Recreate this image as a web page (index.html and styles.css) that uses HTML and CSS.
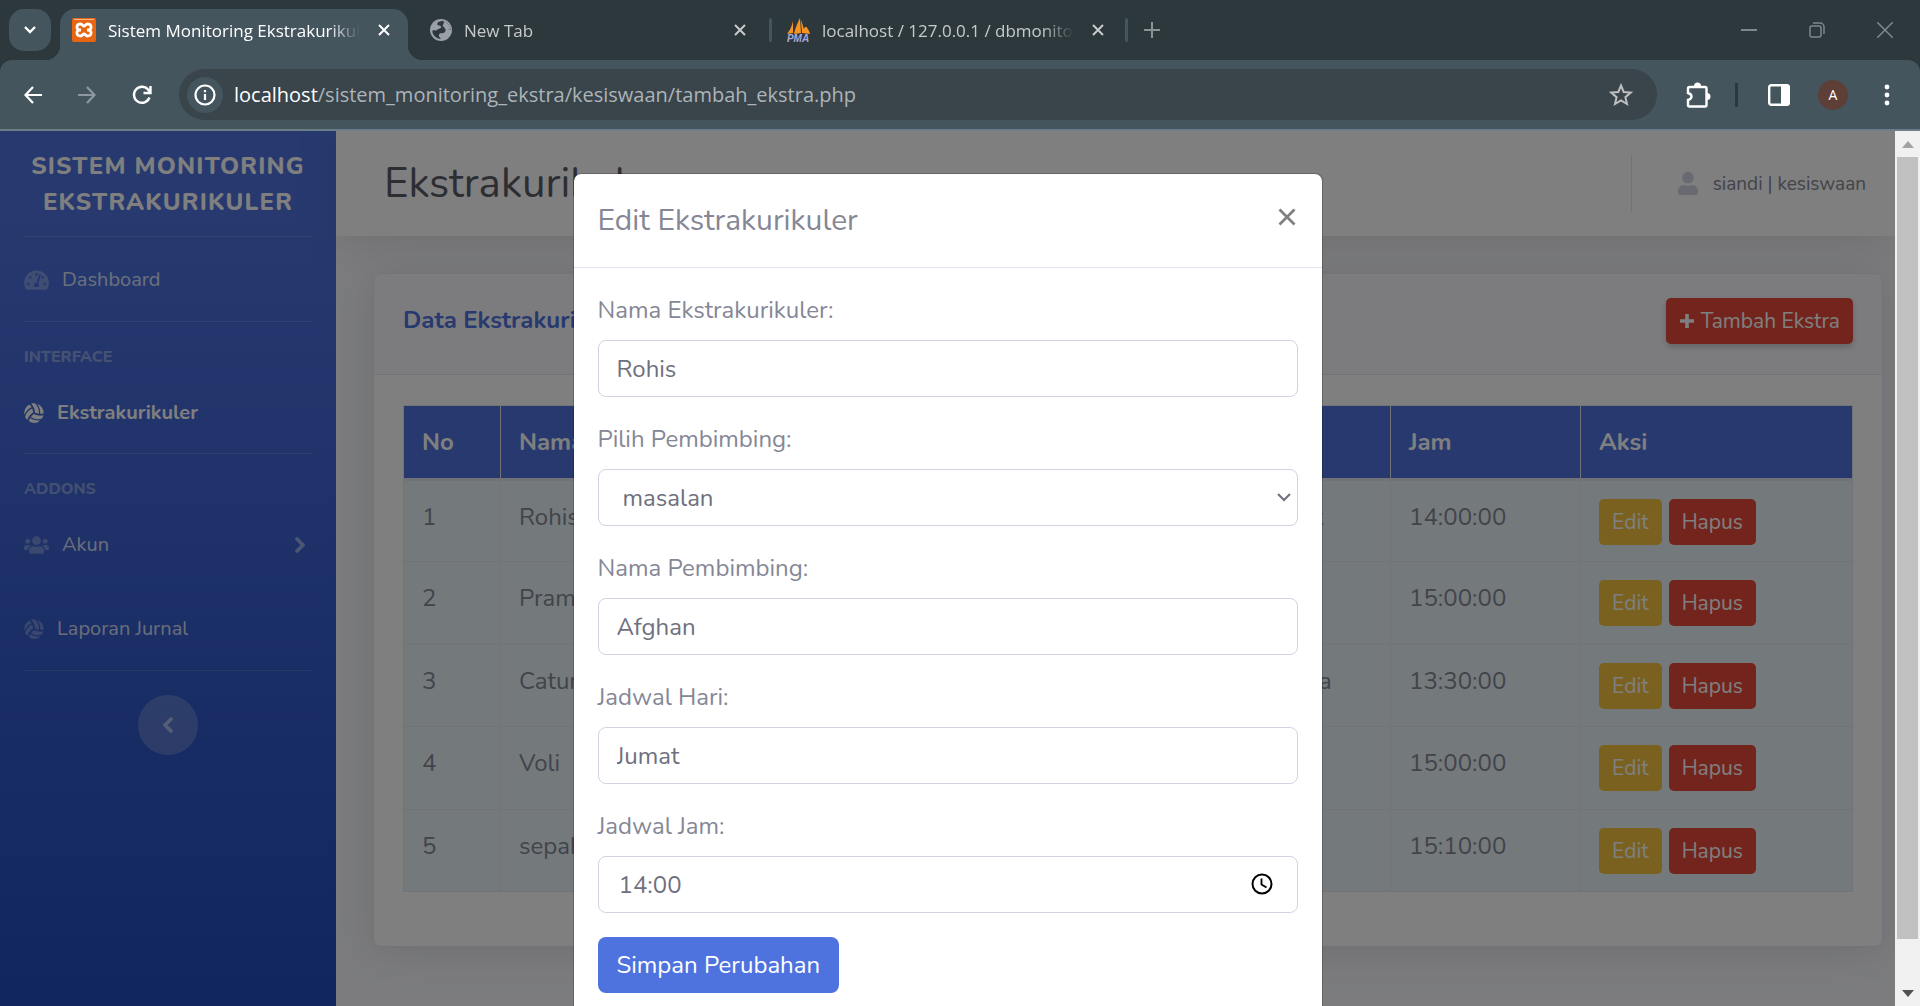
FILE: index.html
```html
<!DOCTYPE html>
<html lang="id">
<head>
<meta charset="utf-8">
<title>Sistem Monitoring Ekstrakurikuler</title>
<link rel="stylesheet" href="styles.css">
</head>
<body>
<svg class="defs" aria-hidden="true">
  <symbol id="volley" viewBox="0 0 512 512"><path d="M231.39 243.48a285.56 285.56 0 0 0-22.7-105.7c-90.8 42.4-157.5 122.4-180.3 216.8a249 249 0 0 0 56.9 81.1 333.87 333.87 0 0 1 146.1-192.2zm-36.9-134.4a284.23 284.23 0 0 0-57.4-70.7c-91 49.8-144.8 152.9-125 262.2 33.4-83.1 98.4-152 182.4-191.5zm187.6 165.1c8.6-99.8-27.3-197.5-97.5-264.4-14.7-1.7-51.6-5.5-98.9 8.5A333.87 333.87 0 0 1 279.19 241a285 285 0 0 0 102.9 33.18zm-124.7 9.5a286.33 286.33 0 0 0-80.2 72.6c82 57.3 184.5 75.1 277.5 47.8a247.15 247.15 0 0 0 42.2-89.9 336.1 336.1 0 0 1-80.9 10.4c-54.6-.1-108.9-14.1-158.6-40.9zm-98.3 99.7c-15.2 26-25.7 54.4-32.1 84.2a247.07 247.07 0 0 0 289-22.1c-112.9 16.1-203.3-24.8-256.9-62.1zm180.3-360.6c55.3 70.4 82.5 161.2 74.6 253.6a286.59 286.59 0 0 0 89.7-14.2c0-2 .3-4 .3-6 0-107.8-68.7-199.1-164.6-233.4z"/></symbol>
  <symbol id="x" viewBox="0 0 12 12"><path d="M1 1L11 11M11 1L1 11" fill="none" stroke="currentColor" stroke-width="2"/></symbol>
</svg>

<header class="browser">
  <div class="tabstrip">
    <button class="tab-search" aria-label="Search tabs"><svg width="12" height="8" viewBox="0 0 12 8"><path d="M1 1l5 5 5-5" fill="none" stroke="currentColor" stroke-width="2.4"/></svg></button>
    <div class="tab active">
      <svg class="favicon" viewBox="0 0 24 24"><rect width="24" height="24" rx="2" fill="#e8650f"/><path d="M2 1.500h20" stroke="#f7b58a" stroke-width="1"/><path d="M8.500 6c-4 0-4.500 4-2 6-2.500 2-2 6 2 6 2.200 0 2.200-2.200 3.500-2.200s1.300 2.200 3.500 2.200c4 0 4.500-4 2-6 2.500-2 2-6-2-6-2.200 0-2.200 2.200-3.500 2.200s-1.300-2.200-3.500-2.200z" fill="none" stroke="#fff" stroke-width="2.800"/><path d="M6 12h3M15 12h3" stroke="#fff" stroke-width="3"/></svg>
      <span class="tab-title">Sistem Monitoring Ekstrakurikuler</span>
      <button class="tab-close" aria-label="Close tab"><svg width="12" height="12"><use href="#x"/></svg></button>
    </div>
    <div class="tab">
      <svg class="favicon globe" viewBox="0 0 24 24"><circle cx="12" cy="12" r="12" fill="#9aa0a6"/><path d="M14 2c-3 1-6 1-6 3.500s3 1 4 2.500-1 2.500-3 3-1 2-3 1.500-3.500-.5-3.500.5C3 18 7 21.500 12 21.500c-2-2-3-3-2-5s4 0 6-2 0-3 2-3.500 4 1.500 4.500.5C22 7 18.500 3 14 2z" fill="#2d383d"/><path d="M14 2c2 2 1 3 0 4.500s2 2 2 3.500 3 1 6.500 1.500C22 7 18.500 3 14 2z" fill="#9aa0a6"/></svg>
      <span class="tab-title">New Tab</span>
      <button class="tab-close" aria-label="Close tab"><svg width="12" height="12"><use href="#x"/></svg></button>
    </div>
    <div class="tab separated">
      <svg class="favicon" viewBox="0 0 24 24"><path d="M7 3C6 8 4 12 1 16l6-1zM14 0c-3 6-5 11-6 16l7-1zM15 2c0 6 1 9 1 13l8 1c-1-4-2-5-3-6v-1h-2l-1 2z" fill="#f79420"/><text class="pma" x="12" y="24" text-anchor="middle">PMA</text></svg>
      <span class="tab-title">localhost / 127.0.0.1 / dbmonitoring</span>
      <button class="tab-close" aria-label="Close tab"><svg width="12" height="12"><use href="#x"/></svg></button>
    </div>
    <button class="new-tab" aria-label="New tab"><svg width="16" height="16" viewBox="0 0 16 16"><path d="M8 0v16M0 8h16" stroke="currentColor" stroke-width="2"/></svg></button>
    <div class="window-controls">
      <button aria-label="Minimize"><svg width="16" height="16" viewBox="0 0 16 16"><path d="M0 8h16" stroke="currentColor" stroke-width="2"/></svg></button>
      <button aria-label="Restore"><svg width="16" height="16" viewBox="0 0 16 16" fill="none" stroke="currentColor" stroke-width="1.500"><rect x="1" y="4" width="11" height="11" rx="2"/><path d="M4 1h7a4 4 0 0 1 4 4v7"/></svg></button>
      <button aria-label="Close"><svg width="16" height="16" viewBox="0 0 16 16"><path d="M0 0l16 16M16 0L0 16" stroke="currentColor" stroke-width="1.500"/></svg></button>
    </div>
  </div>
  <div class="toolbar">
    <button class="tool" aria-label="Back"><svg width="18" height="18" viewBox="0 0 18 18" fill="none" stroke="currentColor" stroke-width="2.200"><path d="M18 9H2M9 1L1.500 9 9 17"/></svg></button>
    <button class="tool disabled" aria-label="Forward"><svg width="18" height="18" viewBox="0 0 18 18" fill="none" stroke="currentColor" stroke-width="2.200"><path d="M0 9h16M9 1l7.500 8L9 17"/></svg></button>
    <button class="tool" aria-label="Reload"><svg width="20" height="20" viewBox="0 0 20 20" fill="none" stroke="currentColor" stroke-width="2.400"><path d="M17.500 12.500A8 8 0 1 1 16 4.500l2 2.500M18.500 1v7h-7"/></svg></button>
    <div class="omnibox">
      <button class="site-info" aria-label="Site information"><svg width="22" height="22" viewBox="0 0 22 22"><circle cx="11" cy="11" r="9.500" fill="none" stroke="currentColor" stroke-width="2.200"/><path d="M11 10v6M11 6v2.200" stroke="currentColor" stroke-width="2.200"/></svg></button>
      <span class="url"><b>localhost</b>/sistem_monitoring_ekstra/kesiswaan/tambah_ekstra.php</span>
      <button class="star" aria-label="Bookmark"><svg width="24" height="24" viewBox="0 0 24 24"><path d="M12 2.500l2.700 6.500 7 .6-5.300 4.600 1.600 6.800-6-3.600L6 21l1.600-6.800L2.300 9.600l7-.6z" fill="none" stroke="currentColor" stroke-width="2"/></svg></button>
    </div>
    <button class="tool ext" aria-label="Extensions"><svg width="26" height="26" viewBox="0 0 26 26"><path d="M3 6.500q0-1.500 1.500-1.500H20q1.500 0 1.500 1.500V23q0 1.500-1.500 1.500H4.500Q3 24.500 3 23v-5q3.500-1 3.500-3.500T3 11z" fill="none" stroke="currentColor" stroke-width="2.400"/><path d="M9 4a3.500 3.500 0 0 1 7 0zM22 11a3.500 3.500 0 0 1 0 7z" fill="currentColor"/></svg></button>
    <span class="tool-sep"></span>
    <button class="tool panel" aria-label="Side panel"><svg width="22" height="22" viewBox="0 0 22 22"><rect x="1.200" y="1.200" width="19.600" height="19.600" rx="2" fill="none" stroke="currentColor" stroke-width="2.400"/><path d="M13 1h8v20h-8z" fill="currentColor"/></svg></button>
    <button class="avatar">A</button>
    <button class="tool menu" aria-label="Menu"><svg width="6" height="22" viewBox="0 0 6 22" fill="currentColor"><circle cx="3" cy="3" r="2.400"/><circle cx="3" cy="11" r="2.400"/><circle cx="3" cy="19" r="2.400"/></svg></button>
  </div>
</header>

<div class="viewport">
  <div class="page">
    <nav class="sidebar">
      <a class="brand" href="#">SISTEM MONITORING EKSTRAKURIKULER</a>
      <hr>
      <a class="nav-link" href="#"><svg class="wide" viewBox="0 0 576 512"><path d="M288 32C128.940 32 0 160.940 0 320c0 52.800 14.250 102.260 39.060 144.800 5.610 9.620 16.300 15.200 27.440 15.200h443c11.140 0 21.830-5.580 27.440-15.200C561.750 422.260 576 372.800 576 320c0-159.060-128.940-288-288-288zm0 64c14.710 0 26.580 10.130 30.320 23.650-1.110 2.260-2.640 4.230-3.450 6.670l-9.220 27.670c-5.130 3.490-10.970 6.010-17.640 6.010-17.670 0-32-14.330-32-32S270.330 96 288 96zM96 384c-17.670 0-32-14.330-32-32s14.330-32 32-32 32 14.330 32 32-14.330 32-32 32zm48-160c-17.670 0-32-14.330-32-32s14.330-32 32-32 32 14.330 32 32-14.330 32-32 32zm246.770-72.410l-61.330 184C343.130 347.330 352 364.540 352 384c0 11.720-3.380 22.550-8.880 32H232.880c-5.500-9.450-8.880-20.280-8.880-32 0-33.940 26.500-61.430 59.900-63.590l61.340-184.010c4.170-12.560 17.730-19.450 30.360-15.170 12.570 4.190 19.350 17.790 15.170 30.360zm14.660 57.200l15.520-46.550c3.470-1.290 7.130-2.230 11.050-2.230 17.670 0 32 14.330 32 32s-14.330 32-32 32c-11.380-.010-20.890-6.280-26.570-15.220zM480 384c-17.670 0-32-14.330-32-32s14.330-32 32-32 32 14.330 32 32-14.330 32-32 32z"/></svg>Dashboard</a>
      <hr>
      <h6>INTERFACE</h6>
      <a class="nav-link active" href="#"><svg viewBox="0 0 512 512"><use href="#volley"/></svg>Ekstrakurikuler</a>
      <hr>
      <h6>ADDONS</h6>
      <a class="nav-link" href="#"><svg class="wide" viewBox="0 0 640 512"><path d="M96 224c35.300 0 64-28.700 64-64s-28.700-64-64-64-64 28.700-64 64 28.700 64 64 64zm448 0c35.300 0 64-28.700 64-64s-28.700-64-64-64-64 28.700-64 64 28.700 64 64 64zm32 32h-64c-17.600 0-33.500 7.100-45.100 18.600 40.300 22.100 68.900 62 75.100 109.400h66c17.700 0 32-14.300 32-32v-32c0-35.300-28.700-64-64-64zm-256 0c61.900 0 112-50.100 112-112S381.900 32 320 32 208 82.100 208 144s50.100 112 112 112zm76.800 32h-8.300c-20.800 10-43.900 16-68.500 16s-47.600-6-68.500-16h-8.300C179.600 288 128 339.600 128 403.200V432c0 26.500 21.500 48 48 48h288c26.500 0 48-21.500 48-48v-28.800c0-63.600-51.600-115.200-115.200-115.200zm-223.700-13.400C161.500 263.100 145.600 256 128 256H64c-35.300 0-64 28.700-64 64v32c0 17.700 14.300 32 32 32h65.900c6.300-47.400 34.900-87.300 75.200-109.400z"/></svg>Akun<svg class="caret" viewBox="0 0 12 16"><path d="M3 2l6 6-6 6" fill="none" stroke="currentColor" stroke-width="3.600" stroke-linecap="round" stroke-linejoin="round"/></svg></a>
      <a class="nav-link" href="#"><svg viewBox="0 0 512 512"><use href="#volley"/></svg>Laporan Jurnal</a>
      <hr>
      <button class="toggle" aria-label="Toggle sidebar"><svg width="12" height="16" viewBox="0 0 12 16"><path d="M9 2L3 8l6 6" fill="none" stroke="currentColor" stroke-width="3.600" stroke-linecap="round" stroke-linejoin="round"/></svg></button>
    </nav>

    <div class="content">
      <header class="topbar">
        <h1>Ekstrakurikuler</h1>
        <a class="user" href="#"><svg width="20" height="23" viewBox="0 0 448 512"><path fill="currentColor" d="M224 256c70.700 0 128-57.300 128-128S294.700 0 224 0 96 57.300 96 128s57.300 128 128 128zm89.600 32h-16.700c-22.200 10.200-46.900 16-72.900 16s-50.600-5.800-72.900-16h-16.700C60.200 288 0 348.200 0 422.400V464c0 26.500 21.500 48 48 48h352c26.500 0 48-21.500 48-48v-41.600c0-74.200-60.200-134.400-134.400-134.400z"/></svg>siandi | kesiswaan</a>
      </header>
      <main>
        <section class="card">
          <div class="card-header">
            <h2>Data Ekstrakurikuler</h2>
            <button class="btn-sm danger shadow"><svg width="16" height="16" viewBox="0 0 16 16"><path d="M8 1v14M1 8h14" stroke="currentColor" stroke-width="3.600"/></svg>Tambah Ekstra</button>
          </div>
          <div class="card-body">
            <table>
              <colgroup><col class="c-no"><col class="c-name"><col><col class="c-day"><col class="c-time"><col class="c-act"></colgroup>
              <thead><tr><th>No</th><th>Nama</th><th>Pembimbing</th><th>Hari</th><th>Jam</th><th>Aksi</th></tr></thead>
              <tbody>
                <tr><td>1</td><td>Rohis</td><td>Afghan</td><td>Jumat</td><td>14:00:00</td><td><button class="btn-sm warning">Edit</button><button class="btn-sm danger">Hapus</button></td></tr>
                <tr><td>2</td><td>Pramuka</td><td></td><td></td><td>15:00:00</td><td><button class="btn-sm warning">Edit</button><button class="btn-sm danger">Hapus</button></td></tr>
                <tr><td>3</td><td>Catur</td><td></td><td>Selasa</td><td>13:30:00</td><td><button class="btn-sm warning">Edit</button><button class="btn-sm danger">Hapus</button></td></tr>
                <tr><td>4</td><td>Voli</td><td></td><td></td><td>15:00:00</td><td><button class="btn-sm warning">Edit</button><button class="btn-sm danger">Hapus</button></td></tr>
                <tr><td>5</td><td>sepakbola</td><td></td><td></td><td>15:10:00</td><td><button class="btn-sm warning">Edit</button><button class="btn-sm danger">Hapus</button></td></tr>
              </tbody>
            </table>
          </div>
        </section>
      </main>
    </div>

    <div class="backdrop">
      <div class="modal" role="dialog" aria-labelledby="modal-title">
        <div class="modal-header">
          <h5 id="modal-title">Edit Ekstrakurikuler</h5>
          <button class="modal-close" aria-label="Close"><svg width="18" height="18" viewBox="0 0 18 18"><path d="M1.500 1.500l15 15M16.500 1.500l-15 15" stroke="currentColor" stroke-width="2.800"/></svg></button>
        </div>
        <form class="modal-body">
          <div class="group"><label for="f1">Nama Ekstrakurikuler:</label><input class="control" id="f1" type="text" value="Rohis"></div>
          <div class="group"><label for="f2">Pilih Pembimbing:</label><div class="field"><select class="control" id="f2"><option>masalan</option></select><svg class="chevron" viewBox="0 0 14 9"><path d="M1 1l6 6 6-6" fill="none" stroke="currentColor" stroke-width="2"/></svg></div></div>
          <div class="group"><label for="f3">Nama Pembimbing:</label><input class="control" id="f3" type="text" value="Afghan"></div>
          <div class="group"><label for="f4">Jadwal Hari:</label><input class="control" id="f4" type="text" value="Jumat"></div>
          <div class="group"><label for="f5">Jadwal Jam:</label><div class="field"><input class="control time" id="f5" type="text" value="14:00"><svg class="clock" viewBox="0 0 22 22"><circle cx="11" cy="11" r="9.500" fill="none" stroke="currentColor" stroke-width="2"/><path d="M10.500 5.500v6l5 3" fill="none" stroke="currentColor" stroke-width="1.800"/></svg></div></div>
          <button class="submit" type="button">Simpan Perubahan</button>
        </form>
      </div>
    </div>
  </div>
  <div class="scrollbar">
    <svg viewBox="0 0 12 7"><path d="M0 7l6-7 6 7z" fill="#a3a3a3"/></svg>
    <div class="thumb"></div>
    <svg viewBox="0 0 12 7"><path d="M0 0l6 7 6-7z" fill="#505050"/></svg>
  </div>
</div>
</body>
</html>
```
FILE: styles.css
```css
* { box-sizing: border-box; }
body {
  margin: 0;
  height: 100vh;
  display: flex;
  flex-direction: column;
  overflow: hidden;
  background: #2d383d;
  font: 24px/36px Nunito, Lato, sans-serif;
  color: #858796;
}
button {
  border: 0;
  padding: 0;
  background: none;
  color: inherit;
  font: inherit;
}
a { color: inherit; text-decoration: none; }
h1, h2, h5, h6 { margin: 0; font-weight: 400; }
.defs { position: absolute; width: 0; height: 0; }

/* Browser frame */
.browser {
  flex: none;
  font: 17px/24px "Segoe UI", "Open Sans", sans-serif;
  color: #fff;
}
.tabstrip { display: flex; height: 60px; padding-left: 9px; }
.tabstrip svg { display: block; }
.tab-search {
  width: 42px;
  height: 42px;
  margin: 9px 9px 0 0;
  border-radius: 15px;
  background: #44555e;
  display: grid;
  place-items: center;
}
.tab {
  position: relative;
  display: flex;
  align-items: center;
  width: 358px;
  height: 42px;
  margin-top: 9px;
  padding: 0 20px 0 22px;
  color: #c7cacc;
}
.tab.active {
  width: 348px;
  height: 51px;
  padding: 0 18px 9px 12px;
  border-radius: 15px 15px 0 0;
  background: #44555e;
  color: #fff;
}
.tab.active::before, .tab.active::after {
  content: "";
  position: absolute;
  bottom: 0;
  width: 14px;
  height: 14px;
}
.tab.active::before { left: -14px; background: radial-gradient(circle at 0 0, transparent 14px, #44555e 14px); }
.tab.active::after { right: -14px; background: radial-gradient(circle at 100% 0, transparent 14px, #44555e 14px); }
.tab.separated { padding-left: 20px; }
.tab.separated::before, .tab.separated::after {
  content: "";
  position: absolute;
  left: 3px;
  width: 3px;
  height: 24px;
  border-radius: 2px;
  background: #44555e;
}
.tab.separated::after { left: auto; right: -4px; }
.favicon { flex: none; width: 24px; height: 24px; margin-right: 12px; }
.globe { width: 22px; height: 22px; }
.pma { font: italic 700 10px "Liberation Sans", sans-serif; fill: #aaa8d8; }
.tab-title {
  flex: 1;
  padding-top: 2px;
  overflow: hidden;
  white-space: nowrap;
  -webkit-mask-image: linear-gradient(to left, transparent, #000 32px);
  mask-image: linear-gradient(to left, transparent, #000 32px);
}
.tab-close { margin-left: 18px; }
.new-tab { margin-left: 20px; color: #8b9397; }
.window-controls { display: flex; gap: 52px; margin-left: auto; padding-right: 27px; color: #7f888c; }
.toolbar {
  display: flex;
  align-items: center;
  height: 71px;
  padding: 0 30px 0 24px;
  border-radius: 12px 12px 0 0;
  border-bottom: 2px solid #6b7e88;
  background: #44555e;
}
.toolbar svg { display: block; }
.tool { margin-right: 36px; }
.tool.disabled { color: #8d999e; }
.tool:nth-of-type(3) { margin-right: 27px; }
.omnibox {
  flex: 1;
  display: flex;
  align-items: center;
  height: 51px;
  padding: 0 24px 0 8px;
  border-radius: 26px;
  background: #39444b;
}
.site-info {
  width: 36px;
  height: 36px;
  margin-right: 11px;
  border-radius: 50%;
  background: #44555e;
  display: grid;
  place-items: center;
}
.url { flex: 1; font-size: 20px; color: #adb4b8; }
.url b { font-weight: 400; color: #fff; }
.star { color: #bfbfbf; }
.tool.ext { margin: 0 24px 0 28px; }
.tool-sep { width: 3px; height: 24px; background: #2d383d; }
.tool.panel { margin: 0 28px 0 30px; }
.avatar {
  width: 30px;
  height: 30px;
  border-radius: 50%;
  background: #5d3f37;
  font-size: 14px;
}
.tool.menu { margin: 0 0 0 36px; }

/* Page */
.viewport { flex: 1; min-height: 0; display: flex; }
.page { position: relative; flex: 1; min-width: 0; display: flex; overflow: hidden; background: #f8f9fc; }
.scrollbar {
  width: 25px;
  padding: 10px 2px 9px;
  display: flex;
  flex-direction: column;
  align-items: center;
  gap: 9px;
  background: #f1f1f1;
}
.scrollbar svg { width: 12px; height: 7px; }
.thumb { width: 21px; flex: 1; margin-bottom: 42px; background: #c1c1c1; }

.sidebar {
  flex: none;
  width: 336px;
  display: flex;
  flex-direction: column;
  background: linear-gradient(180deg, #4e73df 10%, #224abe 100%);
  color: rgba(255, 255, 255, .8);
}
.brand {
  height: 105px;
  padding-top: 17px;
  text-align: center;
  color: #fff;
  font-weight: 800;
  letter-spacing: .05em;
}
.sidebar hr { width: 288px; margin: 0 24px; border: 0; border-top: 1px solid rgba(255, 255, 255, .15); }
.sidebar h6 { height: 48px; padding: 17px 24px 0; font-size: 16px; font-weight: 800; color: rgba(255, 255, 255, .4); }
.nav-link {
  display: flex;
  align-items: center;
  height: 84px;
  padding: 2px 30px 0 24px;
  font-size: 20px;
}
.nav-link svg { width: 20px; height: 20px; margin-right: 13px; fill: rgba(255, 255, 255, .3); }
.nav-link svg.wide { width: 25px; height: 22px; }
.nav-link svg.caret { width: 12px; height: 16px; margin: 0 0 0 auto; opacity: .6; }
.nav-link.active { height: 83px; font-weight: 700; color: #fff; }
.nav-link.active svg { fill: #fff; }
.toggle {
  width: 60px;
  height: 60px;
  margin: 24px auto;
  border-radius: 50%;
  background: rgba(255, 255, 255, .2);
  color: rgba(255, 255, 255, .5);
  display: grid;
  place-items: center;
}

.content { flex: 1; min-width: 0; }
.topbar {
  display: flex;
  align-items: center;
  justify-content: space-between;
  height: 105px;
  padding: 0 29px 0 48px;
  background: #fff;
  box-shadow: 0 4px 42px rgba(58, 59, 69, .15);
}
.topbar h1 { font-size: 42px; line-height: 50px; color: #5a5c69; }
.user {
  display: flex;
  align-items: center;
  height: 57px;
  padding-left: 46px;
  border-left: 1px solid #e3e6f0;
  font-size: 19px;
}
.user svg { margin-right: 15px; color: #d1d3e2; }
main { padding: 37px 12px 0 37px; }
.card {
  border: 1px solid #e3e6f0;
  border-radius: 8px;
  background: #fff;
  box-shadow: 0 4px 42px rgba(58, 59, 69, .15);
}
.card-header {
  display: flex;
  justify-content: space-between;
  align-items: flex-start;
  height: 101px;
  padding: 24px 29px;
  border-bottom: 1px solid #e3e6f0;
  border-radius: 8px 8px 0 0;
  background: #f8f9fc;
}
.card-header h2 { padding-top: 4px; font-size: 24px; font-weight: 700; color: #4e73df; }
.card-body { padding: 30px 29px 54px; }
table { width: 100%; table-layout: fixed; border-collapse: collapse; background: #e8f4f8; }
th, td { padding: 18px; border: 1px solid #e3e6f0; text-align: left; vertical-align: top; }
td { padding-bottom: 0; }
thead th { height: 74px; background: #4e73df; color: #fff; border-bottom-width: 3px; }
tbody tr { height: 82px; }
tbody tr:nth-child(even) { height: 83px; }
.c-no { width: 97px; }
.c-name { width: 370px; }
.c-day { width: 149px; }
.c-time { width: 190px; }
.c-act { width: 272px; }
td .btn-sm { margin-right: 7px; }
.btn-sm {
  height: 46px;
  padding: 0 13px;
  border-radius: 5px;
  font-size: 21px;
  line-height: 32px;
  color: #fff;
}
.danger { background: #e74a3b; }
.warning { background: #f6c23e; }
.shadow { display: flex; align-items: center; gap: 6px; box-shadow: 0 3px 6px rgba(0, 0, 0, .2); }

/* Dialog */
.backdrop { position: absolute; inset: 0; background: rgba(0, 0, 0, .5); }
.modal {
  max-width: 750px;
  margin: 42px auto 0;
  padding-bottom: 96px;
  border: 1px solid rgba(0, 0, 0, .2);
  border-radius: 8px;
  background: #fff;
  background-clip: padding-box;
}
.modal-header {
  display: flex;
  justify-content: space-between;
  align-items: flex-start;
  padding: 24px;
  border-bottom: 1px solid #e3e6f0;
}
.modal-header h5 { font-size: 30px; line-height: 45px; }
.modal-close { padding: 10px 2px; color: #7f7f7f; }
.modal-close svg { display: block; }
.modal-body { padding: 24px; }
.group { display: flex; flex-direction: column; gap: 12px; margin-bottom: 24px; }
.control {
  display: block;
  width: 100%;
  height: 57px;
  padding: 0 18px;
  border: 1px solid #d1d3e2;
  border-radius: 8px;
  background: #fff;
  color: #6e707e;
  font: inherit;
  appearance: none;
}
select.control { padding-left: 24px; }
.control.time { padding-left: 20px; }
.field { position: relative; }
.chevron { position: absolute; right: 7px; top: 24px; width: 14px; height: 9px; color: #6e707e; }
.clock { position: absolute; right: 25px; top: 17px; width: 22px; height: 22px; color: #000; }
.submit { height: 56px; padding: 0 19px; border-radius: 8px; background: #4e73df; color: #fff; }
```
